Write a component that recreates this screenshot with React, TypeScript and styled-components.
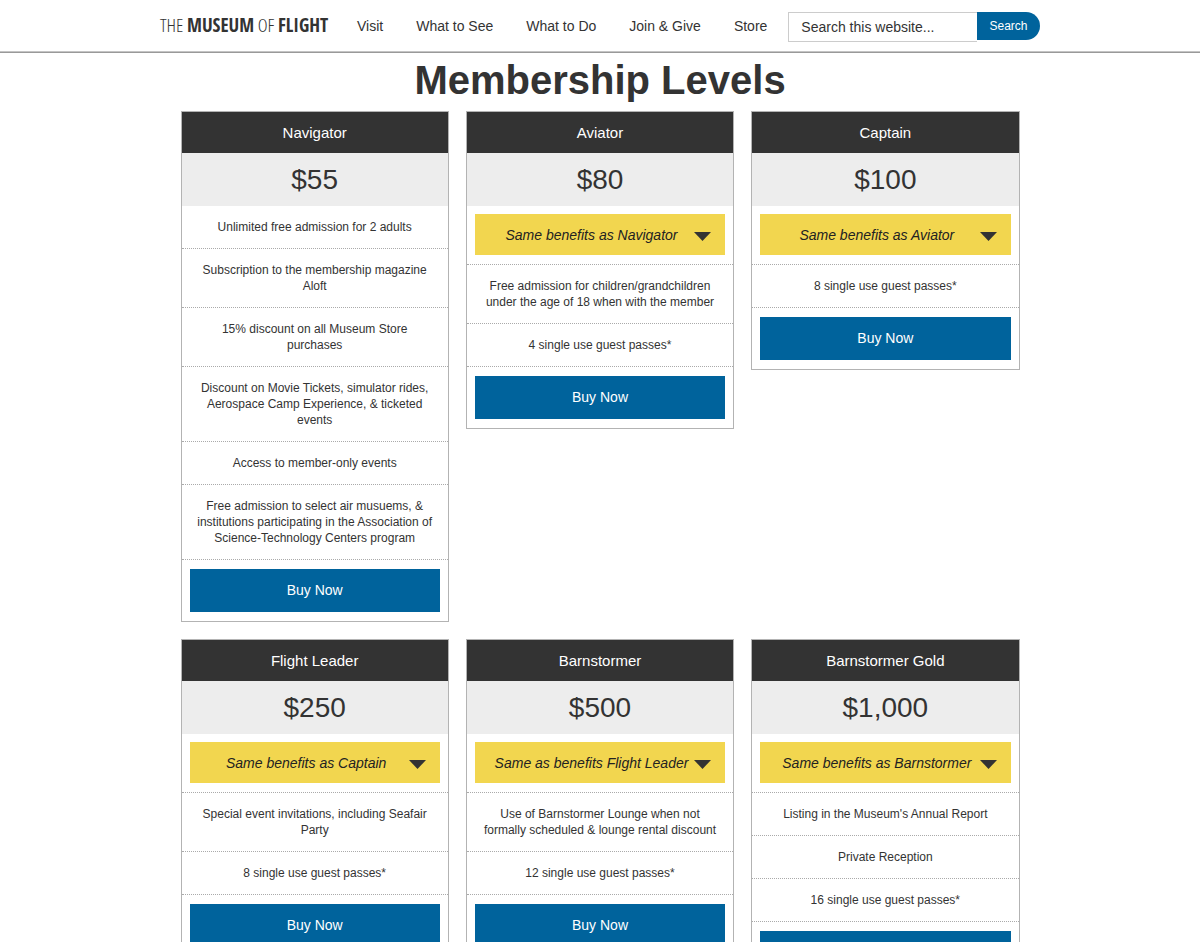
import React from "react";
import styled, { createGlobalStyle } from "styled-components";

const GlobalStyle = createGlobalStyle`
  *, *::before, *::after { box-sizing: border-box; }
  body {
    margin: 0;
    background: #fff;
    color: #333;
    font-family: "Liberation Sans", Arial, Helvetica, sans-serif;
  }
  h1, h2, p, ul { margin: 0; padding: 0; }
  ul { list-style: none; }
  button, input { font-family: inherit; }
`;

const Header = styled.header`
  display: flex;
  justify-content: center;
  height: 53px;
  border-bottom: 1px solid #999;
  box-shadow: inset 0 -1px #c4c4c4;
`;

const HeaderInner = styled.div`
  display: flex;
  align-items: center;
  width: 100%;
  max-width: 880px;
`;

const Logo = styled.a`
  flex: none;
  width: 171px;
  padding-bottom: 2px;
  color: #333;
  font-family: "Open Sans Condensed Light", "Open Sans Condensed", "Open Sans", sans-serif;
  font-size: 19px;
  font-weight: 300;
  line-height: 24px;
  text-decoration: none;
  white-space: nowrap;

  b {
    font-family: "Open Sans Condensed", "Open Sans", sans-serif;
    font-weight: 700;
  }
`;

const Nav = styled.nav`
  display: flex;
  gap: 33px;
  margin-left: 26px;
`;

const NavLink = styled.a`
  color: #333;
  font-size: 14px;
  line-height: 20px;
  text-decoration: none;
  white-space: nowrap;
`;

const SearchForm = styled.form`
  display: flex;
  align-items: flex-start;
  flex: 1;
  min-width: 0;
  margin-left: 21px;
  padding-top: 2px;
`;

const SearchInput = styled.input`
  flex: 1;
  min-width: 0;
  height: 30px;
  padding: 0 12px;
  border: 1px solid #ccc;
  border-right: 0;
  border-radius: 0;
  background: #fff;
  color: #333;
  font-size: 14px;
  outline: none;

  &::placeholder { color: #333; opacity: 1; }
`;

const SearchButton = styled.button`
  flex: none;
  width: 63px;
  height: 28px;
  padding: 0;
  border: 0;
  border-radius: 0 14px 14px 0;
  background: #00639c;
  color: #fff;
  font-size: 12px;
`;

const Main = styled.main`
  max-width: 839px;
  margin: 0 auto;
`;

const Title = styled.h1`
  padding: 3px 0 7px;
  font-size: 40px;
  font-weight: 700;
  line-height: 48px;
  text-align: center;
`;

const Levels = styled.div`
  display: grid;
  grid-template-columns: repeat(3, minmax(0, 1fr));
  align-items: start;
  gap: 17px;
  padding-bottom: 17px;
`;

const Card = styled.section`
  border: 1px solid #b3b3b3;
  text-align: center;
`;

const CardName = styled.h2`
  background: #333;
  color: #fff;
  font-size: 15px;
  font-weight: 400;
  line-height: 41px;
`;

const Price = styled.p`
  background: #ededed;
  font-size: 28px;
  line-height: 53px;
`;

const Benefit = styled.li`
  padding: 13px 12px;
  border-bottom: 1px dotted #aaa;
  font-size: 12px;
  line-height: 16px;
`;

const Included = styled.li`
  padding: 8px 8px 9px;
  border-bottom: 1px dotted #aaa;
`;

const IncludedButton = styled.button`
  display: flex;
  align-items: center;
  width: 100%;
  height: 41px;
  padding: 0 14px;
  border: 0;
  background: #f2d64f;
  color: #222;
  font-size: 14px;
  font-style: italic;
`;

const IncludedLabel = styled.span`
  flex: 1;
  white-space: nowrap;
`;

const Caret = styled.svg`
  flex: none;
  width: 17px;
  height: 9px;
  margin-top: 3px;
`;

const BuyRow = styled.div`
  padding: 9px 8px;
`;

const BuyButton = styled.button`
  display: block;
  width: 100%;
  height: 43px;
  padding: 0 0 2px;
  border: 0;
  background: #00639c;
  color: #fff;
  font-size: 14px;
`;

const navItems = ["Visit", "What to See", "What to Do", "Join & Give", "Store"];

type Level = { name: string; price: string; included?: string; benefits: string[] };

const levels: Level[] = [
  {
    name: "Navigator",
    price: "$55",
    benefits: [
      "Unlimited free admission for 2 adults",
      "Subscription to the membership magazine Aloft",
      "15% discount on all Museum Store purchases",
      "Discount on Movie Tickets, simulator rides, Aerospace Camp Experience, & ticketed events",
      "Access to member-only events",
      "Free admission to select air musuems, & institutions participating in the Association of Science-Technology Centers program",
    ],
  },
  {
    name: "Aviator",
    price: "$80",
    included: "Same benefits as Navigator",
    benefits: [
      "Free admission for children/grandchildren under the age of 18 when with the member",
      "4 single use guest passes*",
    ],
  },
  {
    name: "Captain",
    price: "$100",
    included: "Same benefits as Aviator",
    benefits: ["8 single use guest passes*"],
  },
  {
    name: "Flight Leader",
    price: "$250",
    included: "Same benefits as Captain",
    benefits: ["Special event invitations, including Seafair Party", "8 single use guest passes*"],
  },
  {
    name: "Barnstormer",
    price: "$500",
    included: "Same as benefits Flight Leader",
    benefits: [
      "Use of Barnstormer Lounge when not formally scheduled & lounge rental discount",
      "12 single use guest passes*",
    ],
  },
  {
    name: "Barnstormer Gold",
    price: "$1,000",
    included: "Same benefits as Barnstormer",
    benefits: [
      "Listing in the Museum's Annual Report",
      "Private Reception",
      "16 single use guest passes*",
    ],
  },
];

function LevelCard({ level }: { level: Level }) {
  return (
    <Card>
      <CardName>{level.name}</CardName>
      <Price>{level.price}</Price>
      <ul>
        {level.included && (
          <Included>
            <IncludedButton type="button" aria-expanded={false}>
              <IncludedLabel>{level.included}</IncludedLabel>
              <Caret viewBox="0 0 17 9" aria-hidden="true">
                <path d="M0 0h17L8.500 9z" fill="#333" />
              </Caret>
            </IncludedButton>
          </Included>
        )}
        {level.benefits.map((text) => (
          <Benefit key={text}>{text}</Benefit>
        ))}
      </ul>
      <BuyRow>
        <BuyButton type="button">Buy Now</BuyButton>
      </BuyRow>
    </Card>
  );
}

export default function App() {
  return (
    <>
      <GlobalStyle />
      <Header>
        <HeaderInner>
          <Logo href="#">
            THE <b>MUSEUM</b> OF <b>FLIGHT</b>
          </Logo>
          <Nav>
            {navItems.map((item) => (
              <NavLink key={item} href="#">
                {item}
              </NavLink>
            ))}
          </Nav>
          <SearchForm onSubmit={(e) => e.preventDefault()}>
            <SearchInput type="search" aria-label="Search this website" placeholder="Search this website..." />
            <SearchButton type="submit">Search</SearchButton>
          </SearchForm>
        </HeaderInner>
      </Header>
      <Main>
        <Title>Membership Levels</Title>
        <Levels>
          {levels.map((level) => (
            <LevelCard key={level.name} level={level} />
          ))}
        </Levels>
      </Main>
    </>
  );
}
